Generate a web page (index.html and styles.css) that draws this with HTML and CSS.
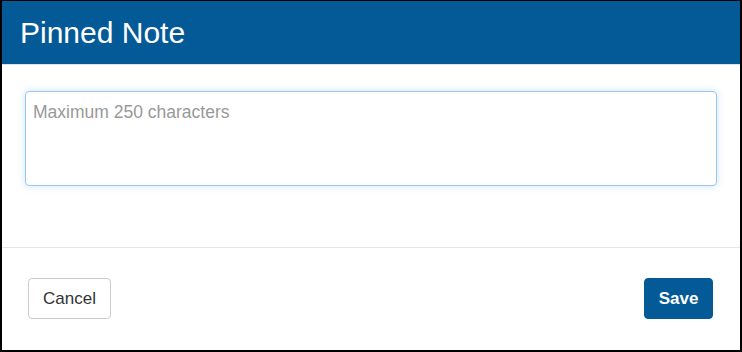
FILE: index.html
```html
<!DOCTYPE html>
<html>
<head>
<meta charset="utf-8">
<link rel="stylesheet" href="styles.css">
</head>
<body>
<div class="modal">
  <div class="modal-header">
    <h1 class="modal-title">Pinned Note</h1>
  </div>
  <div class="modal-body">
    <textarea class="note-input" placeholder="Maximum 250 characters"></textarea>
  </div>
  <div class="modal-footer">
    <button class="btn btn-default">Cancel</button>
    <button class="btn btn-primary">Save</button>
  </div>
</div>
</body>
</html>
```
FILE: styles.css
```css
html, body {
  margin: 0;
  padding: 0;
  background: #fff;
}
body {
  font-family: "Liberation Sans", Arial, sans-serif;
}
.modal {
  box-sizing: border-box;
  width: 742px;
  height: 352px;
  border-style: solid;
  border-color: #000;
  border-width: 1px 2px 2px 2px;
  display: flex;
  flex-direction: column;
  background: #fff;
}
.modal-header {
  height: 63px;
  background: #035a96;
  border-bottom: 1px solid #dde3ea;
  display: flex;
  align-items: center;
  padding-left: 18px;
}
.modal-title {
  margin: 0;
  color: #fff;
  font-weight: normal;
  font-size: 30px;
  line-height: 1;
  padding-top: 0;
}
.modal-body {
  height: 183px;
  padding: 26px 23px 0 23px;
  box-sizing: border-box;
  border-bottom: 1px solid #e5e5e5;
}
.note-input {
  display: block;
  box-sizing: border-box;
  width: 100%;
  height: 95px;
  margin: 0;
  padding: 10px 7px;
  border: 1.5px solid #9cc6f5;
  border-radius: 4px;
  box-shadow: 0 0 7px rgba(102, 175, 233, 0.35);
  font-family: "Liberation Sans", Arial, sans-serif;
  font-size: 17.5px;
  resize: none;
  outline: none;
}
.note-input::placeholder {
  color: #999;
}
.modal-footer {
  flex: 1;
  display: flex;
  justify-content: space-between;
  align-items: flex-start;
  padding: 30px 27px 0 26px;
}
.btn {
  box-sizing: border-box;
  height: 41px;
  border-radius: 4px;
  font-family: "Liberation Sans", Arial, sans-serif;
  font-size: 17px;
  padding: 0;
  cursor: pointer;
}
.btn-default {
  width: 83px;
  background: #fff;
  color: #333;
  border: 1px solid #ccc;
}
.btn-primary {
  width: 69px;
  background: #035a96;
  color: #fff;
  border: 1px solid #035a96;
  font-weight: bold;
}
```
